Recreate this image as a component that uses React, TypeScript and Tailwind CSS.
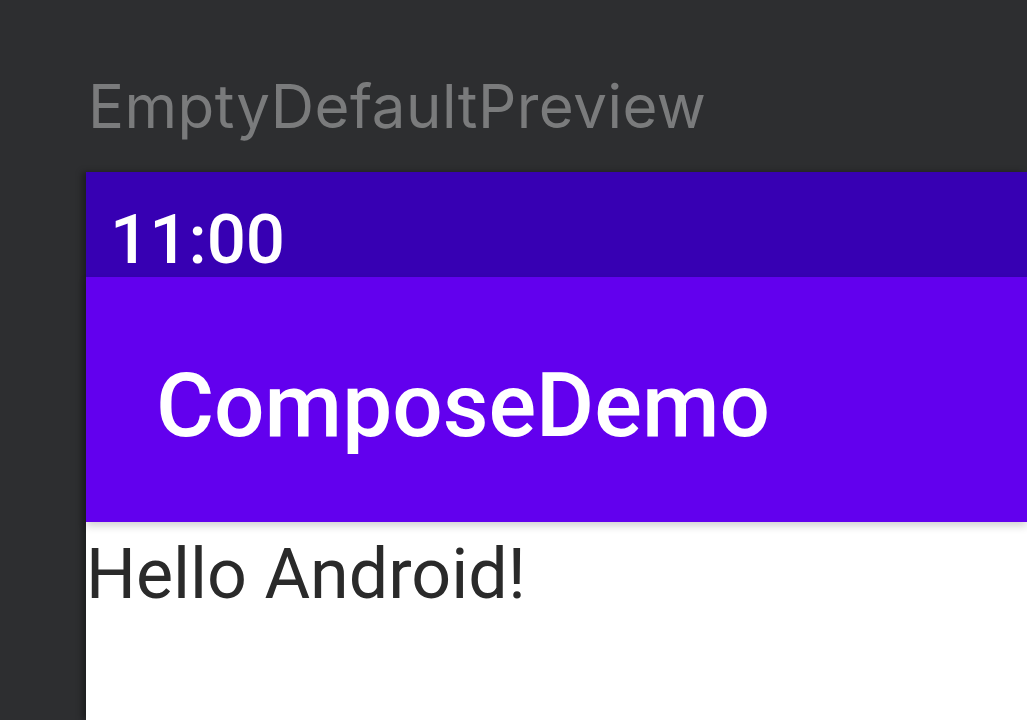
import React from "react";

export default function App() {
  return (
    <div className="w-[1027px] h-[720px] overflow-hidden bg-[#2d2e30] flex flex-col">
      <div
        className="pt-[76px] pl-[88px] text-[60px] leading-none tracking-[0.5px] text-[#7a7b7c] whitespace-nowrap"
        style={{ fontFamily: "Inter, 'Noto Sans', sans-serif" }}
      >
        EmptyDefaultPreview
      </div>
      <div
        className="mt-[36px] ml-[86px] flex-1 flex flex-col bg-white shadow-[-4px_0_6px_rgba(0,0,0,0.35)]"
        style={{ fontFamily: "Roboto, 'Noto Sans', sans-serif" }}
      >
        <div className="h-[105px] bg-[#3700b3] pl-[24px] pt-[33px]">
          <span className="block text-[69px] leading-none font-medium text-white">11:00</span>
        </div>
        <div className="h-[245px] bg-[#6200ee] pl-[70px] pt-[84px] relative z-10 shadow-[0_4px_8px_rgba(0,0,0,0.18)]">
          <span className="block text-[89px] leading-none font-medium text-white whitespace-nowrap">ComposeDemo</span>
        </div>
        <div className="pl-0 pt-[17px] text-[70px] leading-none text-[#2a2a2a] whitespace-nowrap">
          Hello Android!
        </div>
      </div>
    </div>
  );
}
